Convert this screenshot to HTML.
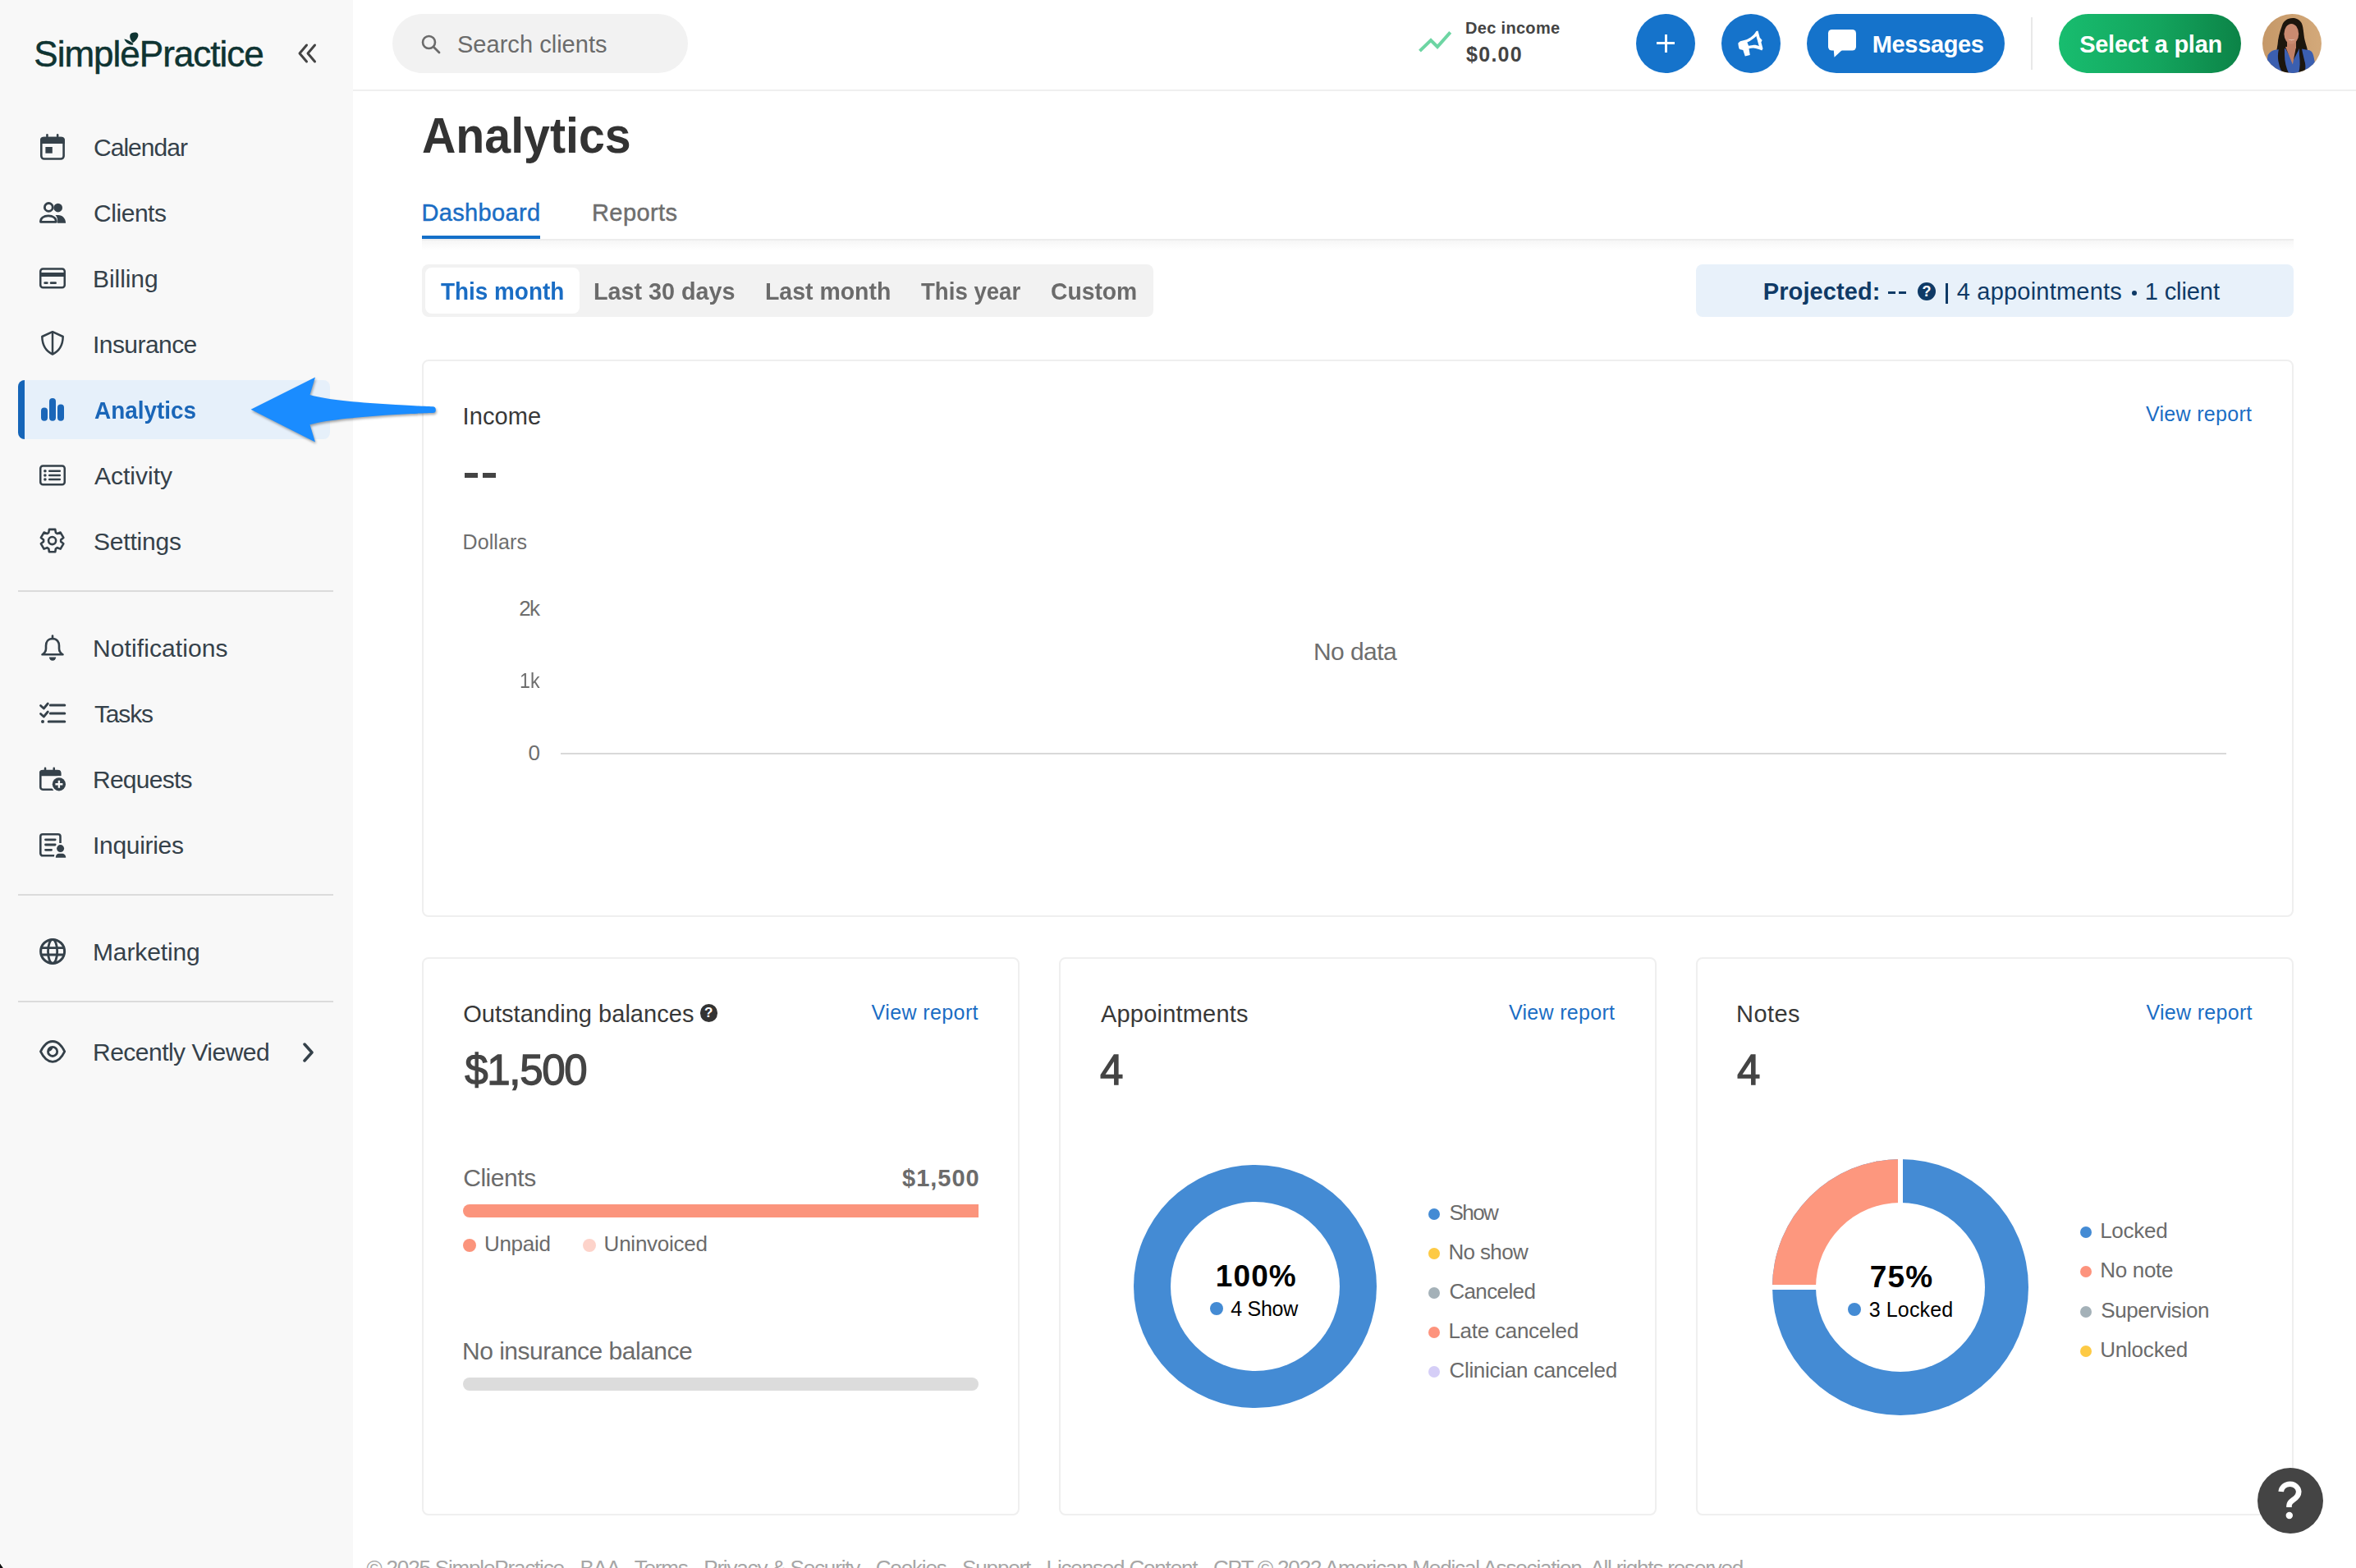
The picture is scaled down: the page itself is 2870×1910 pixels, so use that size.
<!DOCTYPE html>
<html><head><meta charset="utf-8"><title>SimplePractice Analytics</title>
<style>
html,body{margin:0;padding:0;width:2870px;height:1910px;overflow:hidden;background:#fff;font-family:"Liberation Sans", sans-serif;}
.t{position:absolute;white-space:nowrap;font-family:"Liberation Sans", sans-serif;}
.q{display:inline-block;border-radius:50%;color:#fff;text-align:center;font-weight:700;font-family:"Liberation Sans", sans-serif;}
</style></head><body>
<div style="position:absolute;left:0px;top:0px;width:430px;height:1910px;background:#f8f8f8;"></div>
<div class="t" style="left:41.30px;top:44px;font-size:44px;line-height:44px;color:#0f3432;font-weight:400;letter-spacing:-0.997px;-webkit-text-stroke:0.5px #0f3432;">SimplePractice</div>
<svg style="position:absolute;left:140px;top:34px" width="40" height="30" viewBox="0 0 40 30"><path d="M11.3 13.6 C13 17.5 16.5 20.6 20.5 20.8 C21.8 20.9 22.6 20 22.2 19 C19 16.5 15 14.3 11.3 13.6 Z" fill="#0f3432"/><path d="M21.8 18.2 C19.2 15.5 17.6 11.5 18.3 8.8 C19.1 6.2 22.5 5.2 25.5 5.6 C28.3 6 28.9 8.5 28 11 C26.8 14 24 17 21.8 18.2 Z" fill="#0f3432"/></svg>
<svg style="position:absolute;left:360px;top:51px" width="28" height="28" viewBox="0 0 28 28"><path d="M13.5 4 L5 14 L13.5 24 M23.5 4 L15 14 L23.5 24" fill="none" stroke="#444" stroke-width="3" stroke-linecap="round" stroke-linejoin="round"/></svg>
<div style="position:absolute;left:22px;top:463px;width:380px;height:72px;background:#e6f0fa;border-radius:8px;"></div>
<div style="position:absolute;left:22px;top:463px;width:8px;height:72px;background:#1565b8;border-radius:8px 0 0 8px;"></div>
<div class="t" style="left:114.00px;top:165px;font-size:30px;line-height:30px;color:#35414a;font-weight:400;letter-spacing:-0.965px;">Calendar</div>
<div class="t" style="left:114.00px;top:245px;font-size:30px;line-height:30px;color:#35414a;font-weight:400;letter-spacing:-0.450px;">Clients</div>
<div class="t" style="left:113.00px;top:325px;font-size:30px;line-height:30px;color:#35414a;font-weight:400;letter-spacing:-0.059px;">Billing</div>
<div class="t" style="left:113.00px;top:405px;font-size:30px;line-height:30px;color:#35414a;font-weight:400;letter-spacing:-0.558px;">Insurance</div>
<div class="t" style="left:115.00px;top:485px;font-size:30px;line-height:30px;color:#1a66b8;font-weight:700;letter-spacing:0.000px;transform:scaleX(0.9299);transform-origin:0 0;">Analytics</div>
<div class="t" style="left:115.00px;top:565px;font-size:30px;line-height:30px;color:#35414a;font-weight:400;letter-spacing:-0.001px;">Activity</div>
<div class="t" style="left:114.00px;top:645px;font-size:30px;line-height:30px;color:#35414a;font-weight:400;letter-spacing:-0.200px;">Settings</div>
<div class="t" style="left:113.00px;top:775px;font-size:30px;line-height:30px;color:#35414a;font-weight:400;letter-spacing:0.100px;">Notifications</div>
<div class="t" style="left:115.00px;top:855px;font-size:30px;line-height:30px;color:#35414a;font-weight:400;letter-spacing:-1.171px;">Tasks</div>
<div class="t" style="left:113.00px;top:935px;font-size:30px;line-height:30px;color:#35414a;font-weight:400;letter-spacing:-0.748px;">Requests</div>
<div class="t" style="left:113.00px;top:1015px;font-size:30px;line-height:30px;color:#35414a;font-weight:400;letter-spacing:-0.299px;">Inquiries</div>
<div class="t" style="left:113.00px;top:1145px;font-size:30px;line-height:30px;color:#35414a;font-weight:400;letter-spacing:-0.129px;">Marketing</div>
<div class="t" style="left:113.00px;top:1267px;font-size:30px;line-height:30px;color:#35414a;font-weight:400;letter-spacing:-0.516px;">Recently Viewed</div>
<div style="position:absolute;left:22px;top:719px;width:384px;height:2px;background:#dbdbdb;"></div>
<div style="position:absolute;left:22px;top:1089px;width:384px;height:2px;background:#dbdbdb;"></div>
<div style="position:absolute;left:22px;top:1219px;width:384px;height:2px;background:#dbdbdb;"></div>
<svg style="position:absolute;left:46px;top:162px" width="36" height="36" viewBox="0 0 36 36"><rect x="4.3" y="6.1" width="27.3" height="25.4" rx="3.5" fill="none" stroke="#35414a" stroke-width="2.6"/><path d="M3 13 L3 8.3 C3 6.3 4.5 4.8 6.5 4.8 L29.4 4.8 C31.4 4.8 32.9 6.3 32.9 8.3 L32.9 13 Z" fill="#35414a"/><rect x="10.2" y="1" width="2.5" height="5" rx="1.25" fill="#35414a"/><rect x="22.9" y="1" width="2.5" height="5" rx="1.25" fill="#35414a"/><rect x="9.4" y="17" width="8.4" height="7.7" fill="#35414a"/></svg>
<svg style="position:absolute;left:46px;top:241px" width="36" height="36" viewBox="0 0 36 36"><circle cx="24.7" cy="12.1" r="5.3" fill="#35414a"/><path d="M23.5 21 L25 21 C30 21 34.1 25 34.1 30.7 L24 30.7 C24.5 27 24 23.5 21.5 21 Z" fill="#35414a"/><circle cx="13.3" cy="11.4" r="4.9" fill="#f8f8f8" stroke="#35414a" stroke-width="2.8"/><path d="M3.4 29.3 C3.4 24.5 7.5 21.9 12.9 21.9 C18.3 21.9 22.4 24.5 22.4 29.3 Z" fill="#f8f8f8" stroke="#35414a" stroke-width="2.8" stroke-linejoin="round"/></svg>
<svg style="position:absolute;left:46px;top:321px" width="36" height="36" viewBox="0 0 36 36"><rect x="3.25" y="6.45" width="29.5" height="22.8" rx="3" fill="none" stroke="#35414a" stroke-width="2.5"/><rect x="3" y="11" width="30" height="5" fill="#35414a"/><rect x="7.3" y="22.2" width="5.4" height="2.9" rx="1.45" fill="#35414a"/><rect x="14.7" y="22.2" width="8.3" height="2.9" rx="1.45" fill="#35414a"/></svg>
<svg style="position:absolute;left:46px;top:401px" width="36" height="36" viewBox="0 0 36 36"><path d="M18 3.2 L30.7 9 C30.5 19 26.5 26.5 18 30.5 C9.5 26.5 5.5 19 5.3 9 Z" fill="none" stroke="#35414a" stroke-width="2.5" stroke-linejoin="round"/><path d="M18 3.5 L18 30" stroke="#35414a" stroke-width="2.5"/></svg>
<svg style="position:absolute;left:46px;top:481px" width="36" height="36" viewBox="0 0 36 36"><rect x="4" y="15.6" width="8" height="16.2" rx="4" fill="#1a66b8"/><rect x="14" y="4" width="8" height="27.8" rx="4" fill="#1a66b8"/><rect x="24" y="11.6" width="8" height="20.2" rx="4" fill="#1a66b8"/></svg>
<svg style="position:absolute;left:46px;top:561px" width="36" height="36" viewBox="0 0 36 36"><rect x="3.25" y="6.45" width="29.5" height="22.8" rx="3" fill="none" stroke="#35414a" stroke-width="2.5"/><circle cx="8.9" cy="12.7" r="1.8" fill="#35414a"/><circle cx="8.9" cy="18" r="1.8" fill="#35414a"/><circle cx="8.9" cy="23" r="1.8" fill="#35414a"/><path d="M14.2 12.7 H26.8 M14.2 18 H26.8 M14.2 23 H26.8" stroke="#35414a" stroke-width="2.5" stroke-linecap="round"/></svg>
<svg style="position:absolute;left:46px;top:641px" width="36" height="36" viewBox="0 0 36 36"><polygon points="13.92,3.88 21.28,3.88 21.91,7.92 23.83,9.02 27.64,7.56 31.32,13.92 28.14,16.49 28.14,18.71 31.32,21.28 27.64,27.64 23.83,26.18 21.91,27.28 21.28,31.32 13.92,31.32 13.29,27.28 11.37,26.18 7.56,27.64 3.88,21.28 7.06,18.71 7.06,16.49 3.88,13.92 7.56,7.56 11.37,9.02 13.29,7.92" fill="none" stroke="#35414a" stroke-width="2.6" stroke-linejoin="round"/><circle cx="17.6" cy="17.6" r="4.55" fill="none" stroke="#35414a" stroke-width="2.6"/></svg>
<svg style="position:absolute;left:46px;top:772px" width="36" height="36" viewBox="0 0 36 36"><path d="M18 6 C12.5 6 10 10 10 14.5 L10 18 C10 21 8.5 23.5 5.5 25.3 L30.5 25.3 C27.5 23.5 26 21 26 18 L26 14.5 C26 10 23.5 6 18 6 Z" fill="none" stroke="#35414a" stroke-width="2.6" stroke-linejoin="round"/><path d="M18 2.6 V6" stroke="#35414a" stroke-width="2.6" stroke-linecap="round"/><path d="M13.9 28.6 H22.2 A4.15 4.15 0 0 1 13.9 28.6 Z" fill="#35414a"/></svg>
<svg style="position:absolute;left:46px;top:852px" width="36" height="36" viewBox="0 0 36 36"><path d="M3.5 7.5 L7.3 11 L12.3 5 M3.5 17.5 L7.3 21 L12.3 15" fill="none" stroke="#35414a" stroke-width="2.8" stroke-linecap="round" stroke-linejoin="round"/><circle cx="6" cy="27" r="2" fill="#35414a"/><path d="M15.3 7 H32.8 M15.3 17 H32.8 M13.2 27 H32.8" stroke="#35414a" stroke-width="3" stroke-linecap="round"/></svg>
<svg style="position:absolute;left:46px;top:932px" width="36" height="36" viewBox="0 0 36 36"><path d="M21 29.8 L6.5 29.8 C5 29.8 3.3 28.6 3.3 27 L3.3 10 C3.3 8 4.5 7 6.5 7 L24 7 C26 7 27.3 8.2 27.3 10 L27.3 13" fill="none" stroke="#35414a" stroke-width="2.6"/><path d="M2 13.3 L2 9 C2 7 3.5 5.9 5.5 5.9 L24.5 5.9 C26.5 5.9 28 7 28 9 L28 13.3 Z" fill="#35414a"/><rect x="7.8" y="2.5" width="2.5" height="5" rx="1.25" fill="#35414a"/><rect x="18.5" y="2.5" width="2.5" height="5" rx="1.25" fill="#35414a"/><circle cx="25.9" cy="23.3" r="10" fill="#f8f8f8"/><circle cx="25.9" cy="23.3" r="8.1" fill="#35414a"/><path d="M25.9 18.8 V27.8 M21.4 23.3 H30.4" stroke="#f8f8f8" stroke-width="2.4"/></svg>
<svg style="position:absolute;left:46px;top:1012px" width="36" height="36" viewBox="0 0 36 36"><path d="M20.5 30.3 L6 30.3 C4.5 30.3 3.3 29.1 3.3 27.6 L3.3 7 C3.3 5.5 4.5 4.3 6 4.3 L24.8 4.3 C26.3 4.3 27.5 5.5 27.5 7 L27.5 15" fill="none" stroke="#35414a" stroke-width="2.6"/><path d="M9.5 10.8 H21.2 M9.5 17 H21.2 M9.5 23.3 H16.6" stroke="#35414a" stroke-width="2.8" stroke-linecap="round"/><circle cx="27.6" cy="21.6" r="6.5" fill="#f8f8f8"/><path d="M19.8 33.5 C19.8 28 22.5 25.8 25 25.8 L30 25.8 C32.5 25.8 35.5 28 35.5 33.5 Z" fill="#f8f8f8"/><circle cx="27.6" cy="21.6" r="4.5" fill="#35414a"/><path d="M21.8 32.8 C21.8 29.5 23.5 27.8 26 27.8 L29.5 27.8 C32 27.8 34.2 29.5 34.2 32.8 Z" fill="#35414a"/></svg>
<svg style="position:absolute;left:46px;top:1142px" width="36" height="36" viewBox="0 0 36 36"><circle cx="18.1" cy="16.9" r="14.5" fill="none" stroke="#35414a" stroke-width="3"/><ellipse cx="18.1" cy="16.9" rx="5.6" ry="14.5" fill="none" stroke="#35414a" stroke-width="2.8"/><path d="M4 12.7 H32.2 M4 21 H32.2" stroke="#35414a" stroke-width="2.8"/></svg>
<svg style="position:absolute;left:46px;top:1263px" width="36" height="36" viewBox="0 0 36 36"><path d="M3.5 17.9 C7 10.5 12 5.5 18.1 5.5 C24.2 5.5 29.2 10.5 32.7 17.9 C29.2 25.3 24.2 30.3 18.1 30.3 C12 30.3 7 25.3 3.5 17.9 Z" fill="none" stroke="#35414a" stroke-width="2.8" stroke-linejoin="round"/><circle cx="18.1" cy="17.9" r="5.6" fill="none" stroke="#35414a" stroke-width="2.8"/><path d="M18.3 12.5 A5.4 5.4 0 0 0 12.7 17.8 C15.8 17.8 18.3 15.6 18.3 12.5 Z" fill="#35414a"/></svg>
<svg style="position:absolute;left:366px;top:1268px" width="20" height="28" viewBox="0 0 20 28"><path d="M5 4 L14 14 L5 24" fill="none" stroke="#35414a" stroke-width="3.5" stroke-linecap="round" stroke-linejoin="round"/></svg>
<div style="position:absolute;left:430px;top:0px;width:2440px;height:109px;background:#fff;"></div>
<div style="position:absolute;left:430px;top:109px;width:2440px;height:2px;background:#efefef;"></div>
<div style="position:absolute;left:478px;top:17px;width:360px;height:72px;background:#f2f2f2;border-radius:36px;"></div>
<svg style="position:absolute;left:512px;top:41px" width="26" height="26" viewBox="0 0 26 26"><circle cx="10.5" cy="10.5" r="7.5" fill="none" stroke="#6b6b6b" stroke-width="2.6"/><path d="M16 16 L23 23" stroke="#6b6b6b" stroke-width="2.8" stroke-linecap="round"/></svg>
<div class="t" style="left:557.00px;top:40px;font-size:29px;line-height:29px;color:#6b6b6b;font-weight:400;letter-spacing:0.028px;">Search clients</div>
<svg style="position:absolute;left:1720px;top:30px" width="56" height="40" viewBox="1720 30 56 40"><path d="M1729.5 62.1 L1743 49 L1751 57 L1766.7 39.4" fill="none" stroke="#6dd5a3" stroke-width="4"/></svg>
<div class="t" style="left:1785.00px;top:24px;font-size:20px;line-height:20px;color:#444;font-weight:700;letter-spacing:0.317px;">Dec income</div>
<div class="t" style="left:1786.00px;top:54px;font-size:25px;line-height:25px;color:#444;font-weight:700;letter-spacing:1.286px;">$0.00</div>
<div style="position:absolute;left:1993px;top:17px;width:72px;height:72px;background:#1573cb;border-radius:50%;"></div>
<div style="position:absolute;left:2018px;top:51px;width:22px;height:3px;background:#fff;"></div>
<div style="position:absolute;left:2027.5px;top:42px;width:3px;height:22px;background:#fff;"></div>
<div style="position:absolute;left:2097px;top:17px;width:72px;height:72px;background:#1573cb;border-radius:50%;"></div>
<svg style="position:absolute;left:2113px;top:33px" width="40" height="40" viewBox="0 0 40 40"><path d="M4.35 19.4 C4.5 22 5 25 6.05 27.1 L10.3 27.9 L12.8 35.6 L18.8 33.9 L17.5 26.2 C19 25.6 21 25.3 23 25.4 C27 25.8 30.5 27.2 33.2 28.4 L34.5 26.2 L32.4 18.6 L33.6 16 L30.7 12.7 L28.5 4.6 L26.4 5 C24.5 8 23 10 21.3 11 C19 13 16.5 14.5 14.5 15.2 L6.9 17.3 Z" fill="#fff"/><path d="M15.4 18.6 C19 17 23.5 14 26.4 11 L29.8 23.3 C27.5 22 24.5 21.5 22.2 22 L17.1 22.8 Z" fill="#1573cb"/></svg>
<div style="position:absolute;left:2201px;top:17px;width:241px;height:72px;background:#1573cb;border-radius:36px;"></div>
<svg style="position:absolute;left:2220px;top:30px" width="50" height="45" viewBox="2220 30 50 45"><rect x="2227" y="36" width="34" height="25.5" rx="4.5" fill="#fff"/><path d="M2233.7 60 L2234.5 69.8 L2245 60 Z" fill="#fff"/></svg>
<div class="t" style="left:2280.80px;top:40px;font-size:29px;line-height:29px;color:#fff;font-weight:700;letter-spacing:-0.359px;">Messages</div>
<div style="position:absolute;left:2474px;top:21px;width:2px;height:64px;background:#e8e8e8;"></div>
<div style="position:absolute;left:2508px;top:17px;width:222px;height:72px;background:linear-gradient(90deg,#18bd6f 0%,#13a45d 55%,#0c8347 100%);border-radius:36px;"></div>
<div class="t" style="left:2533.20px;top:40px;font-size:29px;line-height:29px;color:#fff;font-weight:700;letter-spacing:-0.274px;">Select a plan</div>
<svg style="position:absolute;left:2756px;top:17px" width="72" height="72" viewBox="0 0 72 72"><defs><clipPath id="av"><circle cx="36" cy="36" r="36"/></clipPath><linearGradient id="avbg" x1="0" y1="0" x2="1" y2="0"><stop offset="0" stop-color="#c59868"/><stop offset="1" stop-color="#d3a97a"/></linearGradient></defs><filter id="avb"><feGaussianBlur stdDeviation="0.7"/></filter><g clip-path="url(#av)"><rect width="72" height="72" fill="url(#avbg)"/><g filter="url(#avb)"><path d="M36.9 4.9 C30 4.9 25.4 9 24 14 C21 22 19 30 18.6 36.8 C17.5 44 16 50 16 56 C16 62 19 68 22 72 L56 72 C56 66 55 60 55.7 50 C55.7 44 53 38 51.5 31.6 C50 24 50 14 47 10 C44.5 6.5 41 4.9 36.9 4.9 Z" fill="#1c1311"/><path d="M6.6 49.9 C10 45 15 43 18 43.6 L28 42 L36.9 58 L45 42 L56 44 C60 44.7 62 47 63.6 57.8 L66 72 L4 72 Z" fill="#3a5fb0"/><path d="M28 40 L41 40 L36.9 61.4 Z" fill="#c08066"/><rect x="30" y="30" width="11" height="12" fill="#c08066"/><path d="M22 36 C19 44 18 52 20 60 C21 66 23 70 26 72 L32 72 C29 66 27 58 27 50 C27 44 27 40 26 36 Z" fill="#1c1311"/><path d="M47 36 C48 44 50 52 52 60 C53 66 52 70 50 72 L44 72 C46 66 46 58 45 50 C44.5 44 45 40 46 36 Z" fill="#1c1311"/><ellipse cx="35.3" cy="24.3" rx="8.9" ry="12.3" fill="#c98a6f"/><path d="M31 30 C33 32 38 32 40 30 C38 33 33 33 31 30 Z" fill="#f2e6e0"/></g></g></svg>
<div class="t" style="left:513.68px;top:134px;font-size:62px;line-height:62px;color:#333;font-weight:700;letter-spacing:0.000px;transform:scaleX(0.9236);transform-origin:0 0;">Analytics</div>
<div class="t" style="left:513.50px;top:245px;font-size:29px;line-height:29px;color:#1a6dc4;font-weight:400;letter-spacing:0.345px;-webkit-text-stroke:0.45px #1a6dc4;">Dashboard</div>
<div class="t" style="left:721.00px;top:245px;font-size:29px;line-height:29px;color:#6e6e6e;font-weight:400;letter-spacing:0.426px;-webkit-text-stroke:0.45px #6e6e6e;">Reports</div>
<div style="position:absolute;left:514px;top:291px;width:2280px;height:2px;background:#ededed;"></div>
<div style="position:absolute;left:514px;top:293px;width:2280px;height:13px;background:linear-gradient(#f6f6f6,#fdfdfd 70%,#fff);"></div>
<div style="position:absolute;left:514px;top:287px;width:144px;height:4px;background:#1470c8;"></div>
<div style="position:absolute;left:514px;top:322px;width:891px;height:64px;background:#f2f2f2;border-radius:8px;"></div>
<div style="position:absolute;left:518px;top:326px;width:188px;height:56px;background:#fff;border-radius:8px;"></div>
<div class="t" style="left:537.00px;top:340px;font-size:30px;line-height:30px;color:#1a6dc4;font-weight:700;letter-spacing:0.000px;transform:scaleX(0.9294);transform-origin:0 0;">This month</div>
<div class="t" style="left:723.08px;top:340px;font-size:30px;line-height:30px;color:#6b6b6b;font-weight:700;letter-spacing:0.000px;transform:scaleX(0.9582);transform-origin:0 0;">Last 30 days</div>
<div class="t" style="left:931.50px;top:340px;font-size:30px;line-height:30px;color:#6b6b6b;font-weight:700;letter-spacing:0.000px;transform:scaleX(0.9480);transform-origin:0 0;">Last month</div>
<div class="t" style="left:1121.80px;top:340px;font-size:30px;line-height:30px;color:#6b6b6b;font-weight:700;letter-spacing:0.000px;transform:scaleX(0.9200);transform-origin:0 0;">This year</div>
<div class="t" style="left:1280.16px;top:340px;font-size:30px;line-height:30px;color:#6b6b6b;font-weight:700;letter-spacing:0.000px;transform:scaleX(0.9423);transform-origin:0 0;">Custom</div>
<div style="position:absolute;left:2066px;top:322px;width:728px;height:64px;background:#e8f1fa;border-radius:8px;"></div>
<div class="t" style="left:2147.80px;top:341px;font-size:29px;line-height:29px;color:#0f3a66;font-weight:700;letter-spacing:0.094px;">Projected:</div>
<div style="position:absolute;left:2299.5px;top:355px;width:9.5px;height:2.5px;background:#0f3a66;"></div>
<div style="position:absolute;left:2312.5px;top:355px;width:9.5px;height:2.5px;background:#0f3a66;"></div>
<div class="q" style="position:absolute;left:2336px;top:344px;width:22px;height:22px;font-size:18px;line-height:23px;background:#0f3a66">?</div>
<div style="position:absolute;left:2370px;top:345px;width:3px;height:25px;background:#0f3a66;"></div>
<div class="t" style="left:2383.70px;top:341px;font-size:29px;line-height:29px;color:#0f3a66;font-weight:400;letter-spacing:0.215px;">4 appointments</div>
<div style="position:absolute;left:2597px;top:354px;width:6px;height:6px;background:#0f3a66;border-radius:50%;"></div>
<div class="t" style="left:2612.70px;top:341px;font-size:29px;line-height:29px;color:#0f3a66;font-weight:400;letter-spacing:-0.090px;">1 client</div>
<div style="position:absolute;left:514px;top:438px;width:2280px;height:679px;background:#fff;border:2px solid #efefef;border-radius:8px;box-sizing:border-box;"></div>
<div class="t" style="left:563.50px;top:493px;font-size:29px;line-height:29px;color:#383838;font-weight:400;letter-spacing:0.106px;">Income</div>
<div style="position:absolute;left:566px;top:576px;width:16px;height:6px;background:#444;"></div>
<div style="position:absolute;left:588px;top:576px;width:16px;height:6px;background:#444;"></div>
<div class="t" style="left:563.50px;top:648px;font-size:25px;line-height:25px;color:#6e6e6e;font-weight:400;letter-spacing:0.117px;">Dollars</div>
<div class="t" style="left:632.30px;top:728px;font-size:26px;line-height:26px;color:#6e6e6e;font-weight:400;letter-spacing:-1.760px;">2k</div>
<div class="t" style="left:632.61px;top:816px;font-size:26px;line-height:26px;color:#6e6e6e;font-weight:400;letter-spacing:0.000px;transform:scaleX(0.8922);transform-origin:0 0;">1k</div>
<div class="t" style="left:643.60px;top:904px;font-size:26px;line-height:26px;color:#6e6e6e;font-weight:400;letter-spacing:0.000px;">0</div>
<div class="t" style="left:1600.00px;top:779px;font-size:30px;line-height:30px;color:#6e6e6e;font-weight:400;letter-spacing:-0.565px;">No data</div>
<div style="position:absolute;left:683px;top:917px;width:2029px;height:2px;background:#d9d9d9;"></div>
<div class="t" style="left:2614.00px;top:492px;font-size:25px;line-height:25px;color:#1a6dc4;font-weight:400;letter-spacing:0.296px;">View report</div>
<div style="position:absolute;left:514px;top:1166px;width:728px;height:680px;background:#fff;border:2px solid #efefef;border-radius:8px;box-sizing:border-box;"></div>
<div style="position:absolute;left:1290px;top:1166px;width:728px;height:680px;background:#fff;border:2px solid #efefef;border-radius:8px;box-sizing:border-box;"></div>
<div style="position:absolute;left:2066px;top:1166px;width:728px;height:680px;background:#fff;border:2px solid #efefef;border-radius:8px;box-sizing:border-box;"></div>
<div class="t" style="left:564.20px;top:1221px;font-size:29px;line-height:29px;color:#383838;font-weight:400;letter-spacing:0.035px;">Outstanding balances</div>
<div class="q" style="position:absolute;left:852.5px;top:1223px;width:21.5px;height:21.5px;font-size:17px;line-height:22px;background:#333">?</div>
<div class="t" style="left:1061.60px;top:1221px;font-size:25px;line-height:25px;color:#1a6dc4;font-weight:400;letter-spacing:0.396px;">View report</div>
<div class="t" style="left:566.30px;top:1278px;font-size:51px;line-height:51px;color:#444;font-weight:400;letter-spacing:-1.325px;-webkit-text-stroke:1.3px #444;">$1,500</div>
<div class="t" style="left:564.20px;top:1420px;font-size:30px;line-height:30px;color:#6b6b6b;font-weight:400;letter-spacing:-0.450px;">Clients</div>
<div class="t" style="left:1099.00px;top:1421px;font-size:29px;line-height:29px;color:#6b6b6b;font-weight:700;letter-spacing:1.006px;">$1,500</div>
<div style="position:absolute;left:564px;top:1467px;width:628px;height:16px;background:#fb947c;border-radius:8px 0 0 8px;"></div>
<div style="position:absolute;left:564px;top:1509px;width:16px;height:16px;background:#fb947c;border-radius:50%;"></div>
<div class="t" style="left:589.90px;top:1502px;font-size:26px;line-height:26px;color:#6b6b6b;font-weight:400;letter-spacing:-0.267px;">Unpaid</div>
<div style="position:absolute;left:710px;top:1509px;width:16px;height:16px;background:#fdd3ca;border-radius:50%;"></div>
<div class="t" style="left:735.60px;top:1502px;font-size:26px;line-height:26px;color:#6b6b6b;font-weight:400;letter-spacing:-0.241px;">Uninvoiced</div>
<div class="t" style="left:563.00px;top:1631px;font-size:30px;line-height:30px;color:#6b6b6b;font-weight:400;letter-spacing:-0.500px;">No insurance balance</div>
<div style="position:absolute;left:564px;top:1678px;width:628px;height:16px;background:#dcdcdc;border-radius:8px;"></div>
<div class="t" style="left:1341.00px;top:1221px;font-size:29px;line-height:29px;color:#383838;font-weight:400;letter-spacing:0.197px;">Appointments</div>
<div class="t" style="left:1838.00px;top:1221px;font-size:25px;line-height:25px;color:#1a6dc4;font-weight:400;letter-spacing:0.296px;">View report</div>
<div class="t" style="left:1340.00px;top:1278px;font-size:51px;line-height:51px;color:#444;font-weight:400;letter-spacing:0.000px;-webkit-text-stroke:1.3px #444;">4</div>
<div style="position:absolute;left:1381px;top:1419px;width:296px;height:296px;border-radius:50%;background:#448bd4"></div>
<div style="position:absolute;left:1426px;top:1464px;width:206px;height:206px;border-radius:50%;background:#fff"></div>
<div class="t" style="left:1480.80px;top:1536px;font-size:37px;line-height:37px;color:#000;font-weight:700;letter-spacing:1.089px;">100%</div>
<div style="position:absolute;left:1474px;top:1586px;width:16px;height:16px;background:#448bd4;border-radius:50%;"></div>
<div class="t" style="left:1499.20px;top:1582px;font-size:25px;line-height:25px;color:#000;font-weight:400;letter-spacing:-0.266px;">4 Show</div>
<div style="position:absolute;left:1740px;top:1472px;width:14px;height:14px;background:#448bd4;border-radius:50%;"></div>
<div class="t" style="left:1765.40px;top:1464px;font-size:26px;line-height:26px;color:#6b6b6b;font-weight:400;letter-spacing:-1.521px;">Show</div>
<div style="position:absolute;left:1740px;top:1520px;width:14px;height:14px;background:#fdca45;border-radius:50%;"></div>
<div class="t" style="left:1764.40px;top:1512px;font-size:26px;line-height:26px;color:#6b6b6b;font-weight:400;letter-spacing:-0.630px;">No show</div>
<div style="position:absolute;left:1740px;top:1568px;width:14px;height:14px;background:#a4b1b8;border-radius:50%;"></div>
<div class="t" style="left:1765.40px;top:1560px;font-size:26px;line-height:26px;color:#6b6b6b;font-weight:400;letter-spacing:-0.628px;">Canceled</div>
<div style="position:absolute;left:1740px;top:1616px;width:14px;height:14px;background:#fd937d;border-radius:50%;"></div>
<div class="t" style="left:1764.40px;top:1608px;font-size:26px;line-height:26px;color:#6b6b6b;font-weight:400;letter-spacing:-0.254px;">Late canceled</div>
<div style="position:absolute;left:1740px;top:1664px;width:14px;height:14px;background:#d5cef7;border-radius:50%;"></div>
<div class="t" style="left:1765.40px;top:1656px;font-size:26px;line-height:26px;color:#6b6b6b;font-weight:400;letter-spacing:-0.282px;">Clinician canceled</div>
<div class="t" style="left:2115.00px;top:1221px;font-size:29px;line-height:29px;color:#383838;font-weight:400;letter-spacing:0.436px;">Notes</div>
<div class="t" style="left:2614.50px;top:1221px;font-size:25px;line-height:25px;color:#1a6dc4;font-weight:400;letter-spacing:0.296px;">View report</div>
<div class="t" style="left:2116.00px;top:1278px;font-size:51px;line-height:51px;color:#444;font-weight:400;letter-spacing:0.000px;-webkit-text-stroke:1.3px #444;">4</div>
<svg style="position:absolute;left:2159px;top:1412px" width="312" height="312" viewBox="0 0 312 312"><circle cx="156" cy="156" r="156" fill="#448bd4"/><path d="M156 156 L0 156 A156 156 0 0 1 156 0 Z" fill="#fd977e"/><rect x="153" y="0" width="6" height="156" fill="#fff"/><rect x="0" y="153" width="156" height="6" fill="#fff"/><circle cx="156" cy="156" r="103" fill="#fff"/></svg>
<div class="t" style="left:2277.70px;top:1537px;font-size:37px;line-height:37px;color:#000;font-weight:700;letter-spacing:1.172px;">75%</div>
<div style="position:absolute;left:2251px;top:1587px;width:16px;height:16px;background:#448bd4;border-radius:50%;"></div>
<div class="t" style="left:2276.70px;top:1583px;font-size:25px;line-height:25px;color:#000;font-weight:400;letter-spacing:0.134px;">3 Locked</div>
<div style="position:absolute;left:2534px;top:1494px;width:14px;height:14px;background:#448bd4;border-radius:50%;"></div>
<div class="t" style="left:2558.20px;top:1486px;font-size:26px;line-height:26px;color:#6b6b6b;font-weight:400;letter-spacing:-0.276px;">Locked</div>
<div style="position:absolute;left:2534px;top:1542px;width:14px;height:14px;background:#fd937d;border-radius:50%;"></div>
<div class="t" style="left:2558.20px;top:1534px;font-size:26px;line-height:26px;color:#6b6b6b;font-weight:400;letter-spacing:-0.301px;">No note</div>
<div style="position:absolute;left:2534px;top:1591px;width:14px;height:14px;background:#a4b1b8;border-radius:50%;"></div>
<div class="t" style="left:2559.20px;top:1583px;font-size:26px;line-height:26px;color:#6b6b6b;font-weight:400;letter-spacing:-0.359px;">Supervision</div>
<div style="position:absolute;left:2534px;top:1639px;width:14px;height:14px;background:#fdca45;border-radius:50%;"></div>
<div class="t" style="left:2558.20px;top:1631px;font-size:26px;line-height:26px;color:#6b6b6b;font-weight:400;letter-spacing:-0.205px;">Unlocked</div>
<div class="t" style="left:446.50px;top:1897px;font-size:26px;line-height:26px;color:#a6a6a6;font-weight:400;letter-spacing:-1.167px;">&copy; 2025 SimplePractice &middot; BAA &middot; Terms &middot; Privacy &amp; Security &middot; Cookies &middot; Support &middot; Licensed Content &middot; CPT &copy; 2022 American Medical Association. All rights reserved</div>
<svg style="position:absolute;left:2750px;top:1788px" width="80" height="80" viewBox="2750 1788 80 80"><circle cx="2790" cy="1828" r="40" fill="#444"/><path d="M2778.7 1817 A10.8 10 0 0 1 2800.25 1817 C2800.25 1822.5 2796.5 1825 2793.5 1827 C2790 1829.5 2788.5 1831.5 2788.5 1834 L2788.5 1836" fill="none" stroke="#fff" stroke-width="6.6"/><circle cx="2788.8" cy="1846" r="4.2" fill="#fff"/></svg>
<svg style="position:absolute;left:0;top:1900px" width="10" height="10" viewBox="0 0 10 10"><path d="M0 4.6 L3.9 10 L0 10 Z" fill="#111"/><path d="M0.3 3.8 L4.7 10" stroke="#fff" stroke-width="1"/></svg>
<svg style="position:absolute;left:290px;top:450px;filter:drop-shadow(1px 2px 1.5px rgba(0,0,0,0.35))" width="260" height="100" viewBox="290 450 260 100"><path d="M377.5 481 C400 487.5 440 490.5 482 493 C505 494.4 520 495.1 527 495.3 A3.85 3.85 0 0 1 527 503 C520 503.2 505 503.6 482 505 C440 507.8 400 511 377.5 517.3 L384 538.6 L305.6 498.8 L384 459.6 Z" fill="#1a8cff"/></svg>
</body></html>
